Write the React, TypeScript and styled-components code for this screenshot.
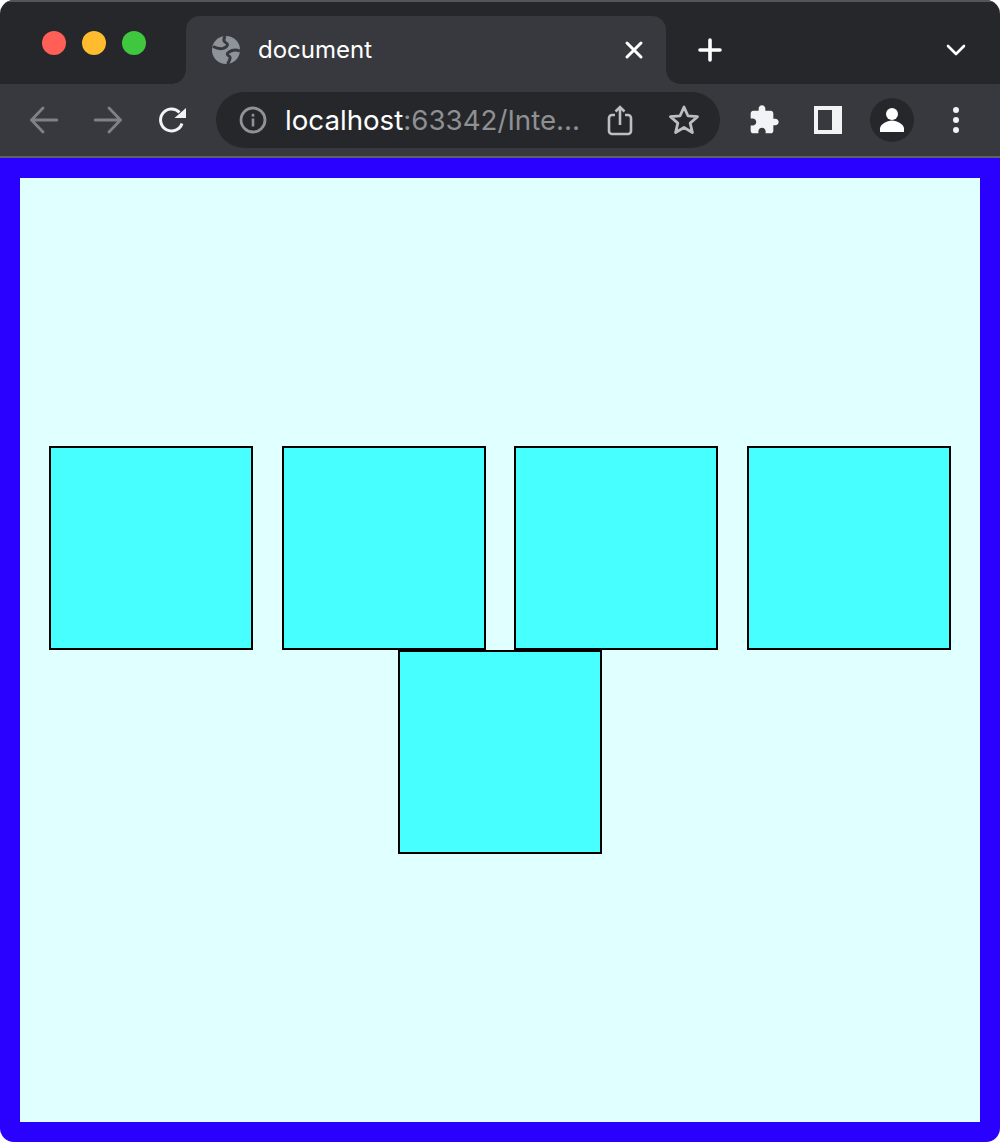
import styled, { createGlobalStyle } from "styled-components";

const GlobalStyle = createGlobalStyle`
  html, body {
    margin: 0;
    padding: 0;
    background: #ffffff;
  }
`;

const tiles = [1, 2, 3, 4, 5];

export default function App() {
  return (
    <>
      <GlobalStyle />
      <BrowserWindow>
        <TabStrip>
          <TrafficLights>
            <Light $color="#ff5f57" />
            <Light $color="#febc2e" />
            <Light $color="#3fc83f" />
          </TrafficLights>
          <Tab>
            <svg width="28" height="28" viewBox="0 0 28 28">
              <circle cx="14" cy="14" r="14" fill="#8e9299" />
              <path
                d="M1 10.500C5 12.500 9 13.500 12 12C16 10.500 16.500 8 13.500 6.500C11.500 5.500 11.500 3 13 0"
                fill="none"
                stroke="#38393e"
                strokeWidth="3"
              />
              <path
                d="M28 15C24 13.500 20 14 17 16C14.500 17.500 15 19 17 20C19 21 18 24 15.500 28"
                fill="none"
                stroke="#38393e"
                strokeWidth="3"
              />
            </svg>
            <TabTitle>document</TabTitle>
            <TabClose width="24" height="24" viewBox="0 0 24 24">
              <path d="M5 5l14 14M19 5L5 19" stroke="#ffffff" strokeWidth="3" strokeLinecap="round" />
            </TabClose>
          </Tab>
          <NewTab width="24" height="24" viewBox="0 0 24 24">
            <path d="M12 2v20M2 12h20" stroke="#ffffff" strokeWidth="3.600" strokeLinecap="round" />
          </NewTab>
          <TabMenu width="24" height="24" viewBox="0 0 24 24">
            <path d="M4 8l8 8 8-8" fill="none" stroke="#ffffff" strokeWidth="2.600" strokeLinecap="round" strokeLinejoin="round" />
          </TabMenu>
        </TabStrip>

        <Toolbar>
          <ToolButton>
            <svg width="28" height="28" viewBox="0 0 28 28">
              <path d="M27 14H2M13 2L1.500 14 13 26" fill="none" stroke="#808185" strokeWidth="2.800" strokeLinecap="round" strokeLinejoin="round" />
            </svg>
          </ToolButton>
          <ToolButton>
            <svg width="28" height="28" viewBox="0 0 28 28">
              <path d="M1 14h25M15 2l11.500 12L15 26" fill="none" stroke="#808185" strokeWidth="2.800" strokeLinecap="round" strokeLinejoin="round" />
            </svg>
          </ToolButton>
          <ToolButton>
            <svg width="28" height="28" viewBox="0 0 28 28">
              <path d="M24 17.500A11 11 0 1 1 21.500 6.400" fill="none" stroke="#f1f3f4" strokeWidth="3" />
              <path d="M28 2v10H16.500z" fill="#f1f3f4" />
            </svg>
          </ToolButton>

          <Omnibox>
            <svg width="28" height="28" viewBox="0 0 28 28">
              <circle cx="14" cy="14" r="12" fill="none" stroke="#8e9299" strokeWidth="2.800" />
              <rect x="12.700" y="12.500" width="2.600" height="8" fill="#8e9299" />
              <rect x="12.700" y="7.800" width="2.600" height="2.800" fill="#8e9299" />
            </svg>
            <Address>
              <Host>localhost</Host>:63342/Inte...
            </Address>
            <OmniAction>
              <svg width="28" height="32" viewBox="0 0 28 32">
                <path d="M9 11H6a3 3 0 0 0-3 3v13a3 3 0 0 0 3 3h16a3 3 0 0 0 3-3V14a3 3 0 0 0-3-3h-3" fill="none" stroke="#bdbec0" strokeWidth="2.600" />
                <path d="M14 21V3M9.500 7.500L14 3l4.500 4.500" fill="none" stroke="#bdbec0" strokeWidth="2.600" />
              </svg>
            </OmniAction>
            <OmniAction>
              <svg width="30" height="30" viewBox="0 0 30 30">
                <path d="M15 2l3.900 8.800 9.600.9-7.300 6.400 2.200 9.400-8.400-5-8.400 5 2.200-9.400-7.300-6.400 9.600-.9z" fill="none" stroke="#bdbec0" strokeWidth="2.800" strokeLinejoin="round" />
              </svg>
            </OmniAction>
          </Omnibox>

          <ToolButton>
            <svg width="32" height="32" viewBox="0 0 24 24">
              <path
                d="M20.500 11H19V7c0-1.100-.9-2-2-2h-4V3.500C13 2.120 11.880 1 10.500 1S8 2.120 8 3.500V5H4c-1.100 0-1.990.9-1.990 2v3.800H3.500c1.490 0 2.700 1.210 2.700 2.700s-1.210 2.700-2.700 2.700H2V20c0 1.100.9 2 2 2h3.800v-1.500c0-1.490 1.210-2.700 2.700-2.700 1.490 0 2.700 1.210 2.700 2.700V22H17c1.100 0 2-.9 2-2v-4h1.500c1.380 0 2.500-1.120 2.500-2.500S21.880 11 20.500 11z"
                fill="#f1f3f4"
              />
            </svg>
          </ToolButton>
          <ToolButton>
            <SidePanel />
          </ToolButton>
          <ToolButton>
            <Avatar>
              <svg width="28" height="28" viewBox="0 0 28 28">
                <circle cx="14" cy="8" r="6" fill="#ffffff" />
                <path d="M2 26v-3.500c0-4 7-8 12-8s12 4 12 8V26z" fill="#ffffff" />
              </svg>
            </Avatar>
          </ToolButton>
          <ToolButton>
            <Kebab>
              <Dot />
              <Dot />
              <Dot />
            </Kebab>
          </ToolButton>
        </Toolbar>

        <Page>
          {tiles.map((tile) => (
            <Tile key={tile} />
          ))}
        </Page>
      </BrowserWindow>
    </>
  );
}

const BrowserWindow = styled.div`
  display: flex;
  flex-direction: column;
  width: 1000px;
  height: 1142px;
  border-radius: 14px;
  overflow: hidden;
  font-family: Inter, "Liberation Sans", sans-serif;
`;

const TabStrip = styled.div`
  display: flex;
  align-items: center;
  box-sizing: border-box;
  height: 84px;
  padding: 14px 32px 0 0;
  background: #26272b;
  border-top: 2px solid #55565a;
`;

const TrafficLights = styled.div`
  display: flex;
  gap: 16px;
  box-sizing: border-box;
  width: 186px;
  padding-left: 42px;
  margin-bottom: 14px;
`;

const Light = styled.span<{ $color: string }>`
  width: 24px;
  height: 24px;
  border-radius: 50%;
  background: ${(props) => props.$color};
`;

const Tab = styled.div`
  position: relative;
  display: flex;
  align-items: center;
  gap: 18px;
  box-sizing: border-box;
  width: 480px;
  height: 68px;
  padding: 0 20px 0 26px;
  background: #38393e;
  border-radius: 14px 14px 0 0;

  &::before,
  &::after {
    content: "";
    position: absolute;
    bottom: 0;
    width: 14px;
    height: 14px;
  }

  &::before {
    left: -14px;
    background: radial-gradient(circle at 0 0, transparent 13.5px, #38393e 14px);
  }

  &::after {
    right: -14px;
    background: radial-gradient(circle at 100% 0, transparent 13.5px, #38393e 14px);
  }
`;

const TabTitle = styled.span`
  flex: 1;
  color: #ffffff;
  font-size: 24px;
  line-height: 28px;
`;

const TabClose = styled.svg`
  flex: none;
`;

const NewTab = styled.svg`
  flex: none;
  margin-left: 32px;
`;

const TabMenu = styled.svg`
  flex: none;
  margin-left: auto;
`;

const Toolbar = styled.div`
  display: flex;
  align-items: center;
  box-sizing: border-box;
  height: 74px;
  padding: 0 12px;
  background: #38393e;
  border-bottom: 2px solid #5f6064;
`;

const ToolButton = styled.div`
  display: flex;
  align-items: center;
  justify-content: center;
  flex: none;
  width: 64px;
  height: 56px;
`;

const Omnibox = styled.div`
  display: flex;
  align-items: center;
  flex: none;
  box-sizing: border-box;
  width: 504px;
  height: 56px;
  margin: 0 12px;
  padding: 0 4px 0 23px;
  background: #26272b;
  border-radius: 28px;
`;

const Address = styled.div`
  flex: 1;
  margin-left: 18px;
  color: #8f9092;
  font-size: 27.7px;
  line-height: 34px;
  white-space: nowrap;
`;

const Host = styled.span`
  color: #ffffff;
`;

const OmniAction = styled.div`
  display: flex;
  align-items: center;
  justify-content: center;
  flex: none;
  width: 64px;
`;

const SidePanel = styled.div`
  box-sizing: border-box;
  width: 28px;
  height: 28px;
  background: #38393e;
  border-style: solid;
  border-color: #f1f3f4;
  border-width: 4px 10px 4px 4px;
`;

const Avatar = styled.div`
  display: flex;
  align-items: center;
  justify-content: center;
  width: 44px;
  height: 44px;
  border-radius: 50%;
  background: #26272b;
`;

const Kebab = styled.div`
  display: flex;
  flex-direction: column;
  gap: 4px;
`;

const Dot = styled.span`
  width: 6px;
  height: 6px;
  border-radius: 50%;
  background: #f1f3f4;
`;

const Page = styled.main`
  flex: 1;
  display: flex;
  flex-wrap: wrap;
  justify-content: space-evenly;
  align-content: center;
  background: #e0ffff;
  border: 20px solid #2a00ff;
`;

const Tile = styled.div`
  box-sizing: border-box;
  width: 204px;
  height: 204px;
  background: #48ffff;
  border: 2px solid #000000;
`;
